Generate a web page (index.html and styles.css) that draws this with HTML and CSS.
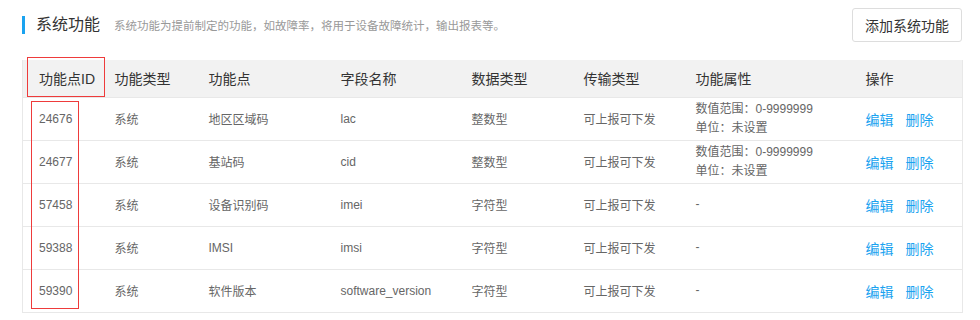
FILE: index.html
```html
<!DOCTYPE html>
<html lang="zh-CN">
<head>
<meta charset="utf-8">
<title>系统功能</title>
<link rel="stylesheet" href="styles.css">
</head>
<body>
<div class="page">
  <div class="head">
    <div class="title-wrap">
      <h2 class="title">系统功能</h2>
      <span class="desc">系统功能为提前制定的功能，如故障率，将用于设备故障统计，输出报表等。</span>
    </div>
    <button class="btn">添加系统功能</button>
  </div>
  <div class="table-wrap">
    <table class="tbl">
      <colgroup>
        <col class="c1"><col class="c2"><col class="c3"><col class="c4"><col class="c5"><col class="c6"><col class="c7"><col class="c8">
      </colgroup>
      <thead>
        <tr><th>功能点ID</th><th>功能类型</th><th>功能点</th><th>字段名称</th><th>数据类型</th><th>传输类型</th><th>功能属性</th><th>操作</th></tr>
      </thead>
      <tbody>
        <tr><td>24676</td><td>系统</td><td>地区区域码</td><td>lac</td><td>整数型</td><td>可上报可下发</td><td class="attr">数值范围：0-9999999<br>单位：未设置</td><td><a class="lnk">编辑</a><a class="lnk">删除</a></td></tr>
        <tr><td>24677</td><td>系统</td><td>基站码</td><td>cid</td><td>整数型</td><td>可上报可下发</td><td class="attr">数值范围：0-9999999<br>单位：未设置</td><td><a class="lnk">编辑</a><a class="lnk">删除</a></td></tr>
        <tr><td>57458</td><td>系统</td><td>设备识别码</td><td>imei</td><td>字符型</td><td>可上报可下发</td><td class="attr">-</td><td><a class="lnk">编辑</a><a class="lnk">删除</a></td></tr>
        <tr><td>59388</td><td>系统</td><td>IMSI</td><td>imsi</td><td>字符型</td><td>可上报可下发</td><td class="attr">-</td><td><a class="lnk">编辑</a><a class="lnk">删除</a></td></tr>
        <tr><td>59390</td><td>系统</td><td>软件版本</td><td>software_version</td><td>字符型</td><td>可上报可下发</td><td class="attr">-</td><td><a class="lnk">编辑</a><a class="lnk">删除</a></td></tr>
      </tbody>
    </table>
    <div class="mark mark-head"></div>
    <div class="mark mark-col"></div>
  </div>
</div>
</body>
</html>
```

FILE: styles.css
```css
* { box-sizing: border-box; }
html, body { margin: 0; padding: 0; background: #fff; }
body {
  font-family: "Liberation Sans", "Noto Sans CJK SC", sans-serif;
  color: #666;
}
.page {
  padding: 8px 18px 0 22px;
}
.head {
  display: flex;
  align-items: center;
  justify-content: space-between;
  height: 34px;
}
.title-wrap {
  display: flex;
  align-items: center;
}
.title {
  margin: 0;
  font-size: 16px;
  font-weight: normal;
  color: #333;
  border-left: 3px solid #1aa3f0;
  padding-left: 11px;
  line-height: 18px;
}
.desc {
  margin-left: 14px;
  font-size: 11.5px;
  color: #999;
}
.btn {
  width: 110px;
  height: 34px;
  border: 1px solid #ddd;
  border-radius: 3px;
  background: #fff;
  font-family: inherit;
  font-size: 14px;
  color: #333;
  padding: 0;
}
.table-wrap {
  position: relative;
  margin-top: 18px;
  width: 940px;
}
.tbl {
  width: 940px;
  table-layout: fixed;
  border-collapse: collapse;
  border: 1px solid #e8e8e8;
  border-top: none;
}
.c1 { width: 76px; }
.c2 { width: 94px; }
.c3 { width: 132px; }
.c4 { width: 131px; }
.c5 { width: 112px; }
.c6 { width: 112px; }
.c7 { width: 170px; }
.c8 { width: 113px; }
.tbl th {
  background: #f2f2f2;
  height: 37px;
  padding: 0 0 0 16px;
  text-align: left;
  font-weight: normal;
  font-size: 14px;
  color: #333;
}
.tbl td {
  height: 43px;
  border-top: 1px solid #e8e8e8;
  padding: 0 0 0 16px;
  font-size: 12px;
  color: #666;
  white-space: nowrap;
}
.tbl td.attr {
  line-height: 19px;
}
.lnk {
  font-size: 14px;
  color: #1aa3f0;
  margin-right: 12px;
  cursor: pointer;
}
.mark {
  position: absolute;
  border: 1px solid #ee3b3b;
  pointer-events: none;
}
.mark-head {
  left: 5px;
  top: -3px;
  width: 78px;
  height: 40px;
}
.mark-col {
  left: 9px;
  top: 41px;
  width: 48px;
  height: 208px;
}
```
